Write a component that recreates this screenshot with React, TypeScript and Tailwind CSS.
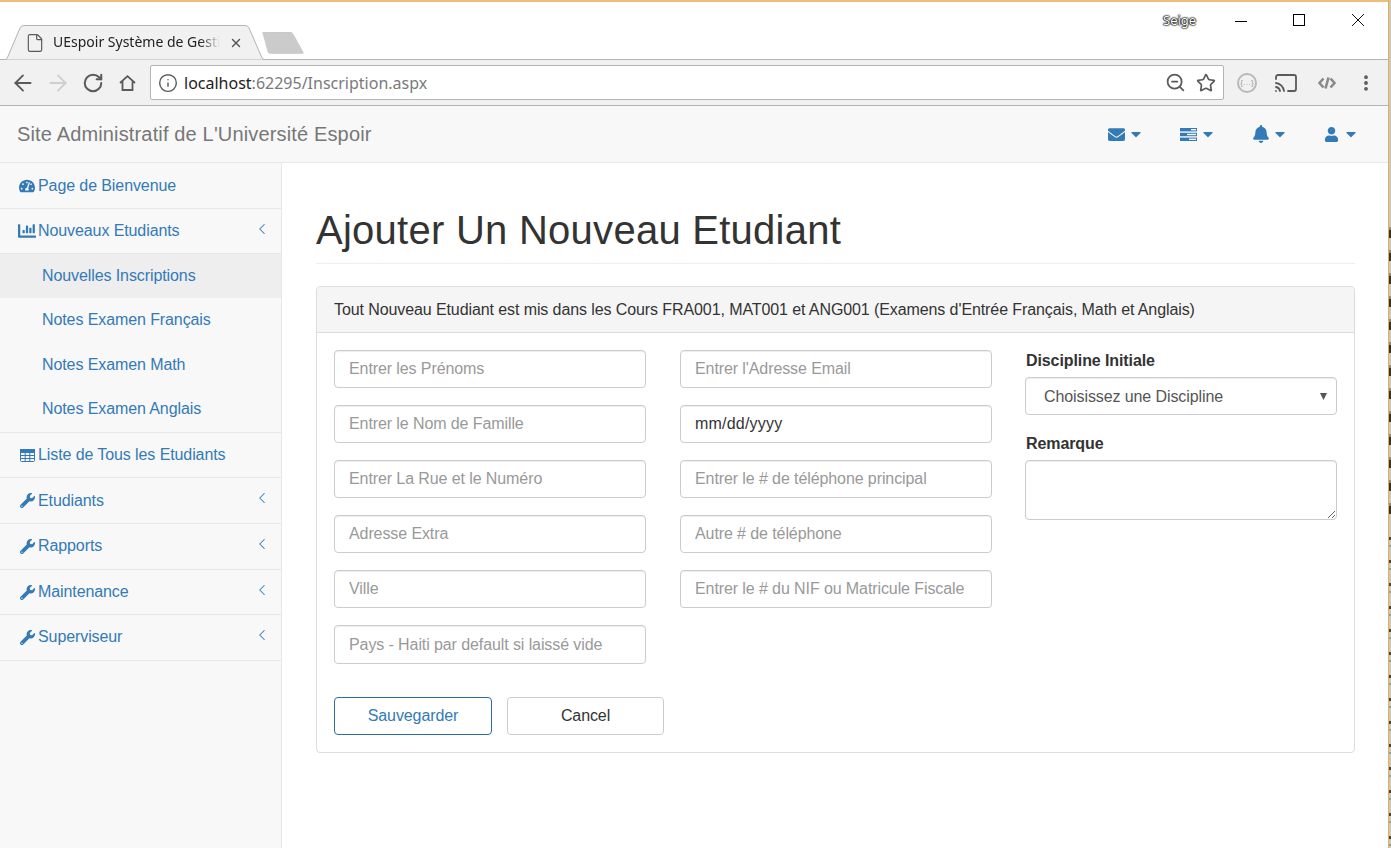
import React from "react";
import { ArrowLeft, ArrowRight, RotateCw, Info, ZoomOut, Star, Cast, File, X, MoreVertical, ChevronLeft } from "lucide-react";
import { FaTachometerAlt, FaChartBar, FaWrench, FaEnvelope, FaBell, FaUser, FaCaretDown } from "react-icons/fa";

const col1 = ["Entrer les Prénoms", "Entrer le Nom de Famille", "Entrer La Rue et le Numéro", "Adresse Extra", "Ville"];
const col2 = ["Entrer l'Adresse Email", "", "Entrer le # de téléphone principal", "Autre # de téléphone", "Entrer le # du NIF ou Matricule Fiscale"];

function TasksIcon() {
  return (
    <svg width="17" height="13" viewBox="0 0 17 13">
      <rect x="0" y="0" width="17" height="3.4" fill="#337ab7" />
      <rect x="0" y="4.8" width="17" height="3.4" fill="#337ab7" />
      <rect x="0" y="9.6" width="17" height="3.4" fill="#337ab7" />
      <rect x="11" y="1" width="5" height="1.4" fill="#f8f8f8" />
      <rect x="7" y="5.8" width="9" height="1.4" fill="#f8f8f8" />
      <rect x="9" y="10.6" width="7" height="1.4" fill="#f8f8f8" />
    </svg>
  );
}

function TableIcon() {
  return (
    <svg width="15" height="13" viewBox="0 0 15 13" fill="none" stroke="#337ab7" strokeWidth="1">
      <rect x="0.5" y="0.5" width="14" height="12" rx="1" />
      <path d="M0.5 3.5 H14.5 M0.5 6.5 H14.5 M0.5 9.5 H14.5 M5.2 3.5 V12.5 M9.8 3.5 V12.5" />
      <rect x="0.5" y="0.5" width="14" height="3" fill="#337ab7" />
    </svg>
  );
}

function NavDrop({ icon, w, gap }: { icon: React.ReactNode; w: string; gap: string }) {
  return (
    <div className={`flex items-center text-[#337ab7] ${w} ${gap}`}>
      {icon}
      <FaCaretDown size={16} />
    </div>
  );
}

function SideRow({ icon, label, chevron, h, extra }: { icon: React.ReactNode; label: string; chevron?: boolean; h: string; extra?: string }) {
  return (
    <div className={`${h} shrink-0 flex items-center pl-[19px] pr-[10px] border-b border-[#e7e7e7] text-[#337ab7]`}>
      <span className="w-[19px] flex justify-start shrink-0">{icon}</span>
      <span className={`flex-1 ${extra ?? ""}`}>{label}</span>
      {chevron && <ChevronLeft size={18} strokeWidth={1.4} className="mb-[5px]" />}
    </div>
  );
}

function SubRow({ label, active, h, extra }: { label: string; active?: boolean; h: string; extra?: string }) {
  return <div className={`${h} flex items-center pl-[42px] text-[#337ab7] ${active ? "bg-[#eeeeee]" : ""} ${extra ?? ""}`}>{label}</div>;
}

function Field({ placeholder, h }: { placeholder: string; h?: string }) {
  return (
    <input
      readOnly
      placeholder={placeholder}
      className={`w-[312px] ${h ?? "h-[38px]"} rounded-[4px] border border-[#cccccc] bg-white px-[14px] text-[16px] text-[#555] placeholder:text-[#999] shadow-[inset_0_1px_1px_rgba(0,0,0,0.075)] outline-none`}
    />
  );
}

export default function App() {
  return (
    <div className="w-[1391px] h-[848px] overflow-hidden flex bg-white font-['Liberation_Sans',Arial,sans-serif] text-[16px] tracking-[-0.095px] text-[#333]">
      <div className="w-[1388px] h-full flex flex-col border-t-2 border-[#ecc07a] shrink-0">
        {/* Tab strip */}
        <div className="h-[58px] shrink-0 flex items-end pl-[3px] border-b border-[#b4b4b4] bg-white tracking-normal">
          <div className="relative w-[262px] h-[35px] mb-[-1px] flex items-center pl-[22px]">
            <svg className="absolute inset-0" width="262" height="35" viewBox="0 0 262 35">
              <path d="M0 34.5 H2 Q3.5 34.5 4.3 33 L17 3 Q18 0.5 21 0.5 H242 Q245 0.5 246 3 L259 33 Q260 34.5 262 34.5" fill="#f1f1f1" stroke="#b4b4b4" strokeWidth="1" />
            </svg>
            <File size={20} strokeWidth={1.4} color="#5a5a5a" className="relative shrink-0" />
            <span className="relative ml-[8px] mb-[2px] w-[167px] whitespace-nowrap font-['Noto_Sans',sans-serif] text-[14px] text-[#222] [mask-image:linear-gradient(to_right,black_88%,transparent)]">
              UEspoir Système de Gesti
            </span>
            <X size={14} strokeWidth={2.4} color="#555" className="relative ml-[9px] shrink-0" />
          </div>
          <svg className="mb-[5px] ml-[-4px]" width="44" height="22" viewBox="0 0 44 22">
            <path d="M2 1.5 Q1 0 3 0 H29 Q31 0 32 2 L42 20 Q43 21.5 41 21.5 H10 Q8 21.5 7 20 Z" fill="#cbcbcb" stroke="#bdbdbd" strokeWidth="0.5" />
          </svg>
          <div className="flex-1 self-stretch relative flex items-start font-['Noto_Sans',sans-serif]">
            <span className="ml-[858px] mt-[9px] text-[13px] leading-[18px] text-white [text-shadow:0_0_2px_#000,0_0_2px_#000,0_0_1px_#000,0_0_1px_#000]">Seige</span>
            <span className="ml-[39px] mt-[19px] w-[12px] h-[1px] bg-black" />
            <span className="ml-[46px] mt-[12px] w-[12px] h-[12px] border border-black" />
            <svg className="ml-[46px] mt-[11px]" width="14" height="14" viewBox="0 0 14 14"><path d="M1 1 L13 13 M13 1 L1 13" stroke="#111" strokeWidth="1" /></svg>
          </div>
        </div>

        {/* Toolbar */}
        <div className="h-[46px] shrink-0 flex items-center bg-[#f1f1f1] border-b border-[#b4b4b4] pl-[10px] tracking-normal">
          <ArrowLeft size={26} color="#5a5a5a" strokeWidth={1.7} />
          <ArrowRight size={26} color="#cfcfcf" strokeWidth={1.7} className="ml-[9px]" />
          <RotateCw size={22} color="#5a5a5a" strokeWidth={2.2} className="ml-[11px]" />
          <svg className="ml-[15px]" width="17" height="16" viewBox="0 0 17 16" fill="none" stroke="#5a5a5a" strokeWidth="1.8">
            <path d="M1 8 L8.5 1.2 L16 8 M3.5 6.5 V15 H13.5 V6.5" />
          </svg>
          <div className="ml-[14px] w-[1074px] h-[35px] rounded-[2px] bg-white border border-[#b4b4b4] flex items-center pl-[7px] pr-[7px]">
            <Info size={20} color="#5a5a5a" strokeWidth={1.7} />
            <span className="ml-[6px] mt-[1px] font-['Noto_Sans',sans-serif] text-[16px] text-[#222]">
              localhost<span className="text-[#7a7a7a]">:62295/Inscription.aspx</span>
            </span>
            <span className="flex-1" />
            <ZoomOut size={21} color="#5a5a5a" strokeWidth={2} />
            <Star size={20} color="#5a5a5a" strokeWidth={2} className="ml-[10px]" />
          </div>
          <div className="ml-[13px] w-[20px] h-[20px] rounded-full border-2 border-[#b9b9b9] flex items-center justify-center text-[8px] leading-none text-[#9a9a9a]">{"{…}"}</div>
          <Cast size={24} color="#5a5a5a" strokeWidth={1.8} className="ml-[17px]" />
          <svg className="ml-[20px]" width="18" height="12" viewBox="0 0 18 12" fill="none" stroke="#8a8a8a" strokeWidth="2.6">
            <path d="M5.5 1.5 L1.5 6 L5.5 10.5 M12.5 1.5 L16.5 6 L12.5 10.5 M10.5 0.5 L7.5 11.5" />
          </svg>
          <MoreVertical size={20} color="#5a5a5a" strokeWidth={2.6} className="ml-[20px]" />
        </div>

        {/* App navbar */}
        <div className="h-[57px] shrink-0 flex items-center bg-[#f8f8f8] border-b border-[#e7e7e7] pl-[17px]">
          <span className="text-[20px] tracking-[0.15px] text-[#777]">Site Administratif de L'Université Espoir</span>
          <span className="flex-1" />
          <NavDrop w="w-[72px]" gap="gap-[3px]" icon={<FaEnvelope size={17} />} />
          <NavDrop w="w-[72px]" gap="gap-[3px]" icon={<TasksIcon />} />
          <NavDrop w="w-[72px]" gap="gap-[2px]" icon={<FaBell size={18} />} />
          <NavDrop w="w-[64px]" gap="gap-[4px]" icon={<FaUser size={15} />} />
        </div>

        <div className="flex-1 flex min-h-0">
          {/* Sidebar */}
          <div className="w-[282px] shrink-0 flex flex-col bg-[#f8f8f8] border-r border-[#e7e7e7]">
            <SideRow h="h-[46px]" icon={<FaTachometerAlt size={16} />} label="Page de Bienvenue" />
            <SideRow h="h-[45px]" icon={<FaChartBar size={18} className="ml-[-1px]" />} label="Nouveaux Etudiants" chevron />
            <div className="flex flex-col border-b border-[#e7e7e7]">
              <SubRow h="h-[44px]" label="Nouvelles Inscriptions" active />
              <SubRow h="h-[45px]" label="Notes Examen Français" extra="pb-[1px]" />
              <SubRow h="h-[44px]" label="Notes Examen Math" />
              <SubRow h="h-[45px]" label="Notes Examen Anglais" extra="pb-[1px]" />
            </div>
            <SideRow h="h-[45px]" icon={<span className="ml-[1px]"><TableIcon /></span>} label="Liste de Tous les Etudiants" />
            <SideRow h="h-[46px]" icon={<FaWrench size={15} className="ml-[1px]" />} label="Etudiants" chevron />
            <SideRow h="h-[46px]" icon={<FaWrench size={15} className="ml-[1px]" />} label="Rapports" chevron extra="pb-[2px]" />
            <SideRow h="h-[45px]" icon={<FaWrench size={15} className="ml-[1px]" />} label="Maintenance" chevron />
            <SideRow h="h-[46px]" icon={<FaWrench size={15} className="ml-[1px]" />} label="Superviseur" chevron extra="pb-[2px]" />
          </div>

          {/* Main */}
          <div className="flex-1 bg-white pl-[34px] pr-[33px]">
            <div className="h-[101px] flex items-end pb-[11px] border-b border-[#eeeeee]">
              <h1 className="text-[40px] leading-[44px] tracking-[0.26px] font-normal text-[#333]">Ajouter Un Nouveau Etudiant</h1>
            </div>
            <div className="mt-[22px] h-[467px] rounded-[4px] border border-[#dddddd] flex flex-col">
              <div className="h-[46px] shrink-0 flex items-center pl-[17px] bg-[#f5f5f5] border-b border-[#dddddd] rounded-t-[4px] text-[#333]">
                Tout Nouveau Etudiant est mis dans les Cours FRA001, MAT001 et ANG001 (Examens d'Entrée Français, Math et Anglais)
              </div>
              <div className="flex-1 pl-[17px] pt-[17px]">
                <div className="flex gap-[34px]">
                  <div className="flex flex-col gap-[17px]">
                    {col1.map((p) => <Field key={p} placeholder={p} />)}
                    <Field h="h-[39px]" placeholder="Pays - Haiti par default si laissé vide" />
                  </div>
                  <div className="flex flex-col gap-[17px]">
                    {col2.map((p, i) =>
                      p ? (
                        <Field key={p} placeholder={p} />
                      ) : (
                        <div key={i} className="w-[312px] h-[38px] rounded-[4px] border border-[#cccccc] bg-white px-[14px] flex items-center text-[16px] tracking-[0.2px] text-[#333] shadow-[inset_0_1px_1px_rgba(0,0,0,0.075)]">mm/dd/yyyy</div>
                      )
                    )}
                  </div>
                  <div className="flex flex-col ml-[-1px]">
                    <label className="font-bold text-[#333] leading-[20px] mt-[1px] ml-[1px]">Discipline Initiale</label>
                    <div className="relative mt-[6px] w-[312px] h-[38px] rounded-[4px] border border-[#cccccc] bg-white pl-[18px] pt-[1px] flex items-center text-[#555] shadow-[inset_0_1px_1px_rgba(0,0,0,0.075)]">
                      Choisissez une Discipline
                      <svg className="absolute right-[9px] top-[15px]" width="7" height="7" viewBox="0 0 7 7"><path d="M0 0 H7 L3.5 7 Z" fill="#555" /></svg>
                    </div>
                    <label className="font-bold text-[#333] leading-[20px] mt-[19px] ml-[1px]">Remarque</label>
                    <textarea readOnly className="mt-[6px] w-[312px] h-[60px] rounded-[4px] border border-[#cccccc] bg-white shadow-[inset_0_1px_1px_rgba(0,0,0,0.075)] outline-none" />
                  </div>
                </div>
                <div className="mt-[33px] flex gap-[15px]">
                  <div className="w-[158px] h-[38px] rounded-[4px] border border-[#2e6da4] flex items-center justify-center text-[#337ab7]">Sauvegarder</div>
                  <div className="w-[157px] h-[38px] rounded-[4px] border border-[#cccccc] flex items-center justify-center text-[#333]">Cancel</div>
                </div>
              </div>
            </div>
          </div>
        </div>
      </div>
      <div className="w-[1px] h-full shrink-0 bg-[#e8ad52]" />
      <div className="w-[2px] h-full shrink-0 flex flex-col bg-[#c8c8c2]">
        <div className="h-[215px] shrink-0" />
        <div className="h-[310px] shrink-0 bg-[repeating-linear-gradient(to_bottom,#c8c8c2_0px,#c8c8c2_12px,#8a8a8a_12px,#8a8a8a_15px,#333333_15px,#333333_23px)]" />
        <div className="flex-1 bg-[repeating-linear-gradient(to_bottom,#c8c8c2_0px,#c8c8c2_12px,#444444_12px,#444444_15px,#c8c8c2_15px,#c8c8c2_20px,#7fa5b8_20px,#7fa5b8_22px,#c8c8c2_22px,#c8c8c2_23px)]" />
      </div>
    </div>
  );
}
